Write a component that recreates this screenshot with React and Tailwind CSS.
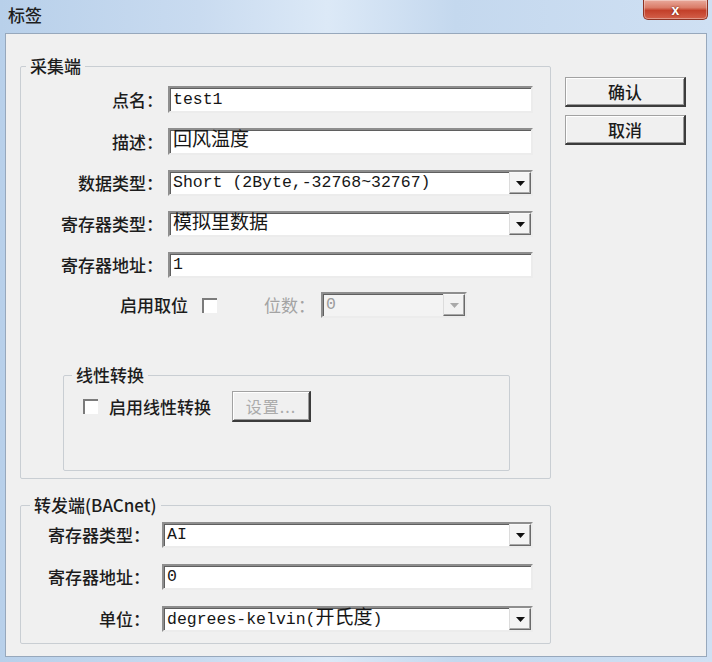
import React from 'react';

const sunken =
  'border-2 border-t-[#8e8e8e] border-l-[#8e8e8e] border-r-[#ececec] border-b-[#ececec] shadow-[inset_1px_1px_0_#5f5f5f]';
const raised =
  'border border-t-[#a2a2a2] border-l-[#a2a2a2] border-r-[#3c3c3c] border-b-[#3c3c3c] border-b-2 border-r-2 shadow-[inset_1px_1px_0_#ffffff,inset_-1px_-1px_0_#9a9a9a]';
const mono = "font-['Liberation_Mono','Noto_Sans_CJK_SC',monospace]";

const Arrow = ({ disabled }) => (
  <div
    className={`h-full w-[22px] flex items-center justify-center ${
      disabled ? 'bg-[#f2f2f2]' : 'bg-[#f4f4f4]'
    } border border-t-[#f8f8f8] border-l-[#dcdcdc] border-r-[#6a6a6a] border-b-[#6a6a6a] shadow-[inset_-1px_-1px_0_#a8a8a8]`}
  >
    <svg width="9" height="5" viewBox="0 0 9 5">
      <path d="M0 0h9L4.5 5z" fill={disabled ? '#a9a9a9' : '#111'} />
    </svg>
  </div>
);

const Box = ({ w, combo, disabled, children }) => (
  <div
    className={`${w} h-full flex items-center ${sunken} ${
      disabled ? 'bg-[#f3f3f3] text-[#9c9c9c]' : 'bg-white text-[#161616]'
    }`}
  >
    <div className={`flex-1 min-w-0 pl-[3px] ${mono} text-[16.5px] leading-[22px] whitespace-pre`}>
      {children}
    </div>
    {combo && <Arrow disabled={disabled} />}
  </div>
);

const Row = ({ label, labelW, gap, w, h, combo, children }) => (
  <div className={`flex items-center ${h}`}>
    <span className={`${labelW} text-right text-[17px] leading-[22px] font-medium whitespace-nowrap`}>{label}</span>
    <div className={`${gap} h-full`}>
      <Box w={w} combo={combo}>
        {children}
      </Box>
    </div>
  </div>
);

const Check = () => (
  <div className="w-[15px] h-[15px] bg-white border-t-2 border-l-2 border-[#7b7b7b]" />
);

export default function App() {
  return (
    <div className="w-[712px] h-[662px] flex flex-col overflow-hidden bg-[linear-gradient(90deg,#b8d0ea_0%,#c9dbf0_28%,#dce9f7_46%,#c4d8ee_64%,#cfe0f3_100%)] font-['Noto_Sans_CJK_SC',sans-serif] text-[#1c1c1c]">
      {/* title bar */}
      <div className="h-[33px] flex items-start justify-between pl-[8px] pr-[4px]">
        <span className="mt-[4px] text-[17px] leading-[22px] font-medium text-[#1e1e1e]">标签</span>
        <div className="w-[65px] h-[20px] rounded-b-[5px] border border-t-0 border-[#8e3324] bg-[linear-gradient(180deg,#e9a99b_0%,#da7c68_40%,#c3402a_55%,#d3604a_100%)] shadow-[inset_0_0_0_1px_rgba(255,255,255,0.35)] flex items-center justify-center">
          <span className="font-['Liberation_Sans',sans-serif] font-bold text-[14px] leading-none text-white [text-shadow:0_0_2px_#5a1208]">x</span>
        </div>
      </div>

      {/* client area */}
      <div className="flex-1 mx-[5px] mb-[5px] border border-[#97a8bc] bg-[#f0f0f0] flex">
        <div className="w-[545px] pl-[14px]">
          {/* 采集端 */}
          <fieldset className="mt-[22px] w-[531px] h-[423px] border border-[#c9ced3] rounded-[2px]">
            <legend className="ml-[5px] px-[4px] text-[17px] leading-[20px] font-medium">采集端</legend>
            <div className="mt-[10px] flex flex-col gap-[15px]">
              <Row label="点名：" labelW="w-[142px]" gap="ml-[5px]" w="w-[365px]" h="h-[27px]">
                test1
              </Row>
              <Row label="描述：" labelW="w-[142px]" gap="ml-[5px]" w="w-[365px]" h="h-[27px]">
                <span className="text-[19px]">回风温度</span>
              </Row>
              <Row label="数据类型：" labelW="w-[142px]" gap="ml-[5px]" w="w-[365px]" h="h-[26px]" combo>
                Short (2Byte,-32768~32767)
              </Row>
              <Row label="寄存器类型：" labelW="w-[142px]" gap="ml-[5px]" w="w-[365px]" h="h-[26px]" combo>
                <span className="text-[19px]">模拟里数据</span>
              </Row>
              <Row label="寄存器地址：" labelW="w-[142px]" gap="ml-[5px]" w="w-[365px]" h="h-[26px]">
                1
              </Row>
            </div>

            <div className="mt-[14px] h-[26px] flex items-center pl-[99px]">
              <span className="text-[17px] leading-[22px] font-medium">启用取位</span>
              <div className="ml-[14px]">
                <Check />
              </div>
              <span className="ml-[47px] text-[17px] leading-[22px] text-[#a3a3a3]">位数：</span>
              <div className="ml-[6px] h-full">
                <Box w="w-[146px]" combo disabled>
                  0
                </Box>
              </div>
            </div>

            {/* 线性转换 */}
            <fieldset className="ml-[42px] mt-[47px] w-[447px] h-[106px] border border-[#c9ced3] rounded-[2px]">
              <legend className="ml-[8px] px-[4px] text-[17px] leading-[20px] font-medium">线性转换</legend>
              <div className="mt-[6px] flex items-center">
                <div className="ml-[19px]">
                  <Check />
                </div>
                <span className="ml-[11px] text-[17px] leading-[22px] font-medium">启用线性转换</span>
                <div className={`ml-[21px] w-[79px] h-[31px] bg-[#f0f0f0] ${raised} flex items-center justify-center`}>
                  <span className="text-[16px] leading-[20px] text-[#ababab] tracking-[1px]">设置...</span>
                </div>
              </div>
            </fieldset>
          </fieldset>

          {/* 转发端 */}
          <fieldset className="mt-[16px] w-[531px] h-[149px] border border-[#c9ced3] rounded-[2px]">
            <legend className="ml-[9px] px-[4px] text-[17px] leading-[20px] font-medium">转发端(BACnet)</legend>
            <div className="mt-[7px] flex flex-col gap-[16px]">
              <Row label="寄存器类型：" labelW="w-[129px]" gap="ml-[12px]" w="w-[371px]" h="h-[26px]" combo>
                AI
              </Row>
              <Row label="寄存器地址：" labelW="w-[129px]" gap="ml-[12px]" w="w-[371px]" h="h-[26px]">
                0
              </Row>
              <Row label="单位：" labelW="w-[129px]" gap="ml-[12px]" w="w-[371px]" h="h-[26px]" combo>
                degrees-kelvin(<span className="text-[19px]">开氏度</span>)
              </Row>
            </div>
          </fieldset>
        </div>

        {/* buttons */}
        <div className="pl-[14px] pt-[43px] flex flex-col gap-[8px]">
          <div className={`w-[121px] h-[30px] bg-[#f0f0f0] ${raised} flex items-center justify-center`}>
            <span className="text-[17px] leading-[22px] font-medium">确认</span>
          </div>
          <div className={`w-[121px] h-[30px] bg-[#f0f0f0] ${raised} flex items-center justify-center`}>
            <span className="text-[17px] leading-[22px] font-medium">取消</span>
          </div>
        </div>
      </div>
    </div>
  );
}
